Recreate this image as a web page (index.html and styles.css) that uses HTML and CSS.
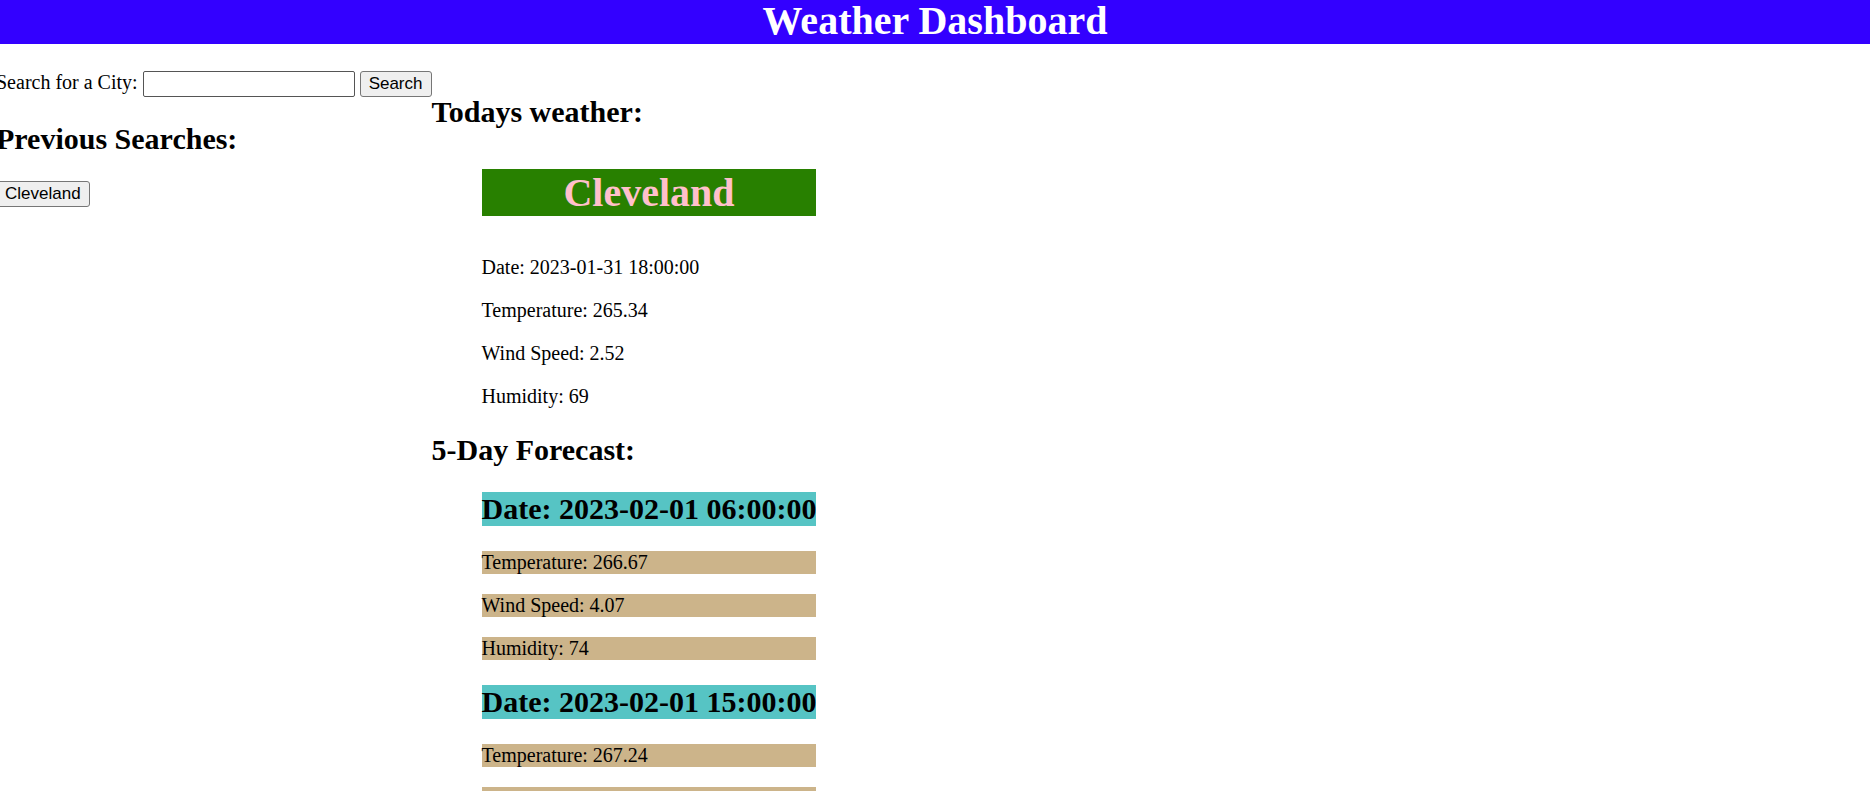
FILE: index.html
```html
<!DOCTYPE html>
<html lang="en">
<head>
<meta charset="utf-8">
<title>Weather Dashboard</title>
<link rel="stylesheet" href="styles.css">
</head>
<body>
<header class="header"><h1 class="title">Weather Dashboard</h1></header>
<main class="layout">
  <aside class="sidebar">
    <form class="search">
      <label for="city">Search for a City:</label>
      <input class="city-input" id="city" type="text">
      <button class="button" type="button">Search</button>
    </form>
    <h2 class="heading">Previous Searches:</h2>
    <button class="button" type="button">Cleveland</button>
  </aside>
  <div class="weather">
    <section>
      <h2 class="heading">Todays weather:</h2>
      <div class="today">
        <h1 class="city">Cleveland</h1>
        <p>Date: 2023-01-31 18:00:00</p>
        <p>Temperature: 265.34</p>
        <p>Wind Speed: 2.52</p>
        <p>Humidity: 69</p>
      </div>
    </section>
    <section>
      <h2 class="heading">5-Day Forecast:</h2>
      <div class="forecast">
        <h2 class="date">Date: 2023-02-01 06:00:00</h2>
        <p>Temperature: 266.67</p>
        <p>Wind Speed: 4.07</p>
        <p>Humidity: 74</p>
        <h2 class="date">Date: 2023-02-01 15:00:00</h2>
        <p>Temperature: 267.24</p>
        <p></p>
      </div>
    </section>
  </div>
</main>
</body>
</html>
```
FILE: styles.css
```css
* {
  box-sizing: border-box;
}

html {
  height: 100%;
  overflow: hidden;
}

body {
  height: 100%;
  margin: 0;
  overflow: hidden;
  background: #fff;
  color: #000;
  font: 20px/23px "Liberation Serif", "Times New Roman", serif;
}

.header {
  padding-bottom: 2px;
  background: #30f;
  color: #fff;
  text-align: center;
}

.title {
  margin: 0;
  font-size: 40px;
  line-height: 42px;
}

.layout {
  display: flex;
  align-items: flex-start;
  margin-left: -4px;
  padding-top: 26px;
}

.search {
  display: flex;
  align-items: flex-start;
  gap: 5px;
  padding-top: 1px;
}

.city-input {
  width: 212px;
  height: 26px;
  border: 1px solid #555;
  border-radius: 2px;
  background: #fff;
  font: 17px "Liberation Sans", Arial, sans-serif;
}

.button {
  height: 26px;
  padding: 0 8px;
  border: 1px solid #767676;
  border-radius: 3px;
  background: #efefef;
  color: #000;
  font: 17px/20px "Liberation Sans", Arial, sans-serif;
}

.heading,
.date {
  margin: 25px 0;
  font-size: 30px;
  line-height: 34px;
}

.today,
.forecast {
  margin: 0 50px;
}

.city {
  margin: 40px 0;
  background: #288000;
  color: pink;
  font-size: 40px;
  line-height: 47px;
  text-align: center;
}

.weather p {
  min-height: 23px;
  margin: 20px 0;
}

.forecast .date {
  background: #56c4c4;
}

.forecast p {
  background: #ccb48a;
}
```
